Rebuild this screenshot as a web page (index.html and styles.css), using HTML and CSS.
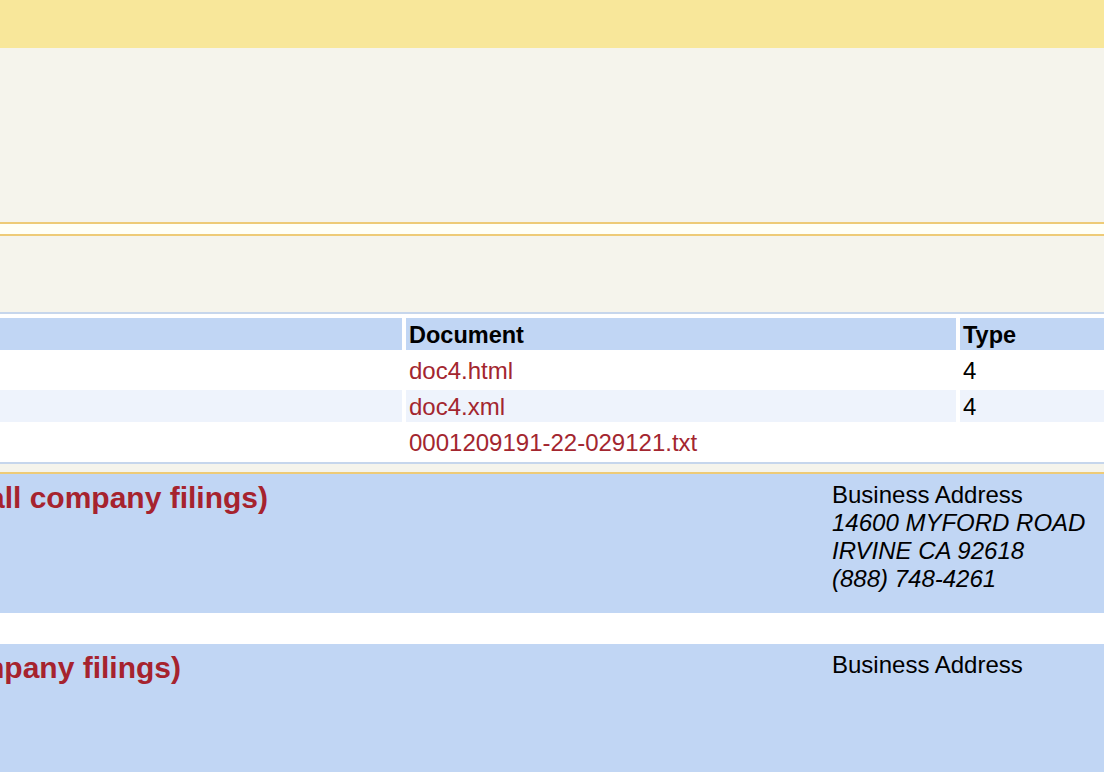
FILE: index.html
```html
<!DOCTYPE html>
<html lang="en">
<head>
<meta charset="utf-8">
<title>Filing Index</title>
<link rel="stylesheet" href="styles.css">
</head>
<body>
<div class="header-top"></div>
<div class="page-title"></div>
<div class="rule-pair"></div>
<div class="form-grouping"></div>

<div class="table-file">
  <div class="cell head"></div>
  <div class="cell head">Document</div>
  <div class="cell head">Type</div>

  <div class="cell"></div>
  <div class="cell"><a href="#">doc4.html</a></div>
  <div class="cell">4</div>

  <div class="cell alt"></div>
  <div class="cell alt"><a href="#">doc4.xml</a></div>
  <div class="cell alt">4</div>

  <div class="cell"></div>
  <div class="cell"><a href="#">0001209191-22-029121.txt</a></div>
  <div class="cell"></div>
</div>

<div class="filer-gap"></div>

<div class="company-info first">
  <div class="name-clip issuer"><span class="company-name">Rivian Automotive, Inc. / DE (Issuer) (see all company filings)</span></div>
  <div class="mailer">
    <div class="mailer-title">Business Address</div>
    <div class="mailer-line">14600 MYFORD ROAD</div>
    <div class="mailer-line">IRVINE CA 92618</div>
    <div class="mailer-line">(888) 748-4261</div>
  </div>
</div>

<div class="company-gap"></div>

<div class="company-info second">
  <div class="name-clip reporting"><span class="company-name">Reporting Owner (Reporting) (see all company filings)</span></div>
  <div class="mailer">
    <div class="mailer-title">Business Address</div>
  </div>
</div>
</body>
</html>
```

FILE: styles.css
```css
html, body {
  margin: 0;
  padding: 0;
  background: #ffffff;
  font-family: "Liberation Sans", Arial, Helvetica, sans-serif;
  color: #000000;
  overflow: hidden;
}

.header-top {
  height: 48px;
  background: #f8e79a;
}

.page-title {
  height: 174px;
  background: #f5f4ec;
}

.rule-pair {
  height: 10px;
  background: #fffff6;
  border-top: 2px solid #eecb77;
  border-bottom: 2px solid #eecb77;
}

.form-grouping {
  height: 76px;
  background: #f5f4ec;
}

.table-file {
  display: grid;
  grid-template-columns: 402px 550px 1fr;
  grid-auto-rows: 32px;
  gap: 4px;
  padding: 4px 0;
  background: #ffffff;
  border-top: 2px solid #c6d6ec;
  border-bottom: 2px solid #c6d6ec;
  font-size: 24px;
  line-height: 28px;
}

.cell {
  padding: 3px 3px 1px 3px;
  white-space: nowrap;
  overflow: hidden;
}

.cell.head {
  background: #c1d6f4;
  font-weight: bold;
  font-size: 23.5px;
}

.cell.alt {
  background: #eef3fc;
}

.cell a {
  color: #a3262f;
  text-decoration: none;
}

.filer-gap {
  height: 8px;
  background: #f5f4ec;
  border-bottom: 2px solid #eecb77;
}

.company-info {
  display: flex;
  align-items: flex-start;
  background: #c1d6f4;
  padding: 7px 0 20px 0;
}

.company-info.second {
  min-height: 150px;
}

.company-gap {
  height: 31px;
  background: #ffffff;
}

.name-clip {
  display: flex;
  justify-content: flex-end;
  white-space: nowrap;
  flex: none;
}

.name-clip.issuer {
  width: 268px;
}

.name-clip.reporting {
  width: 181px;
}

.company-name {
  font-size: 30px;
  line-height: 34px;
  font-weight: bold;
  color: #a6232e;
}

.mailer {
  margin-left: auto;
  width: 272px;
  flex: none;
  line-height: 28px;
  white-space: nowrap;
}

.mailer-title {
  font-size: 24px;
}

.mailer-line {
  font-size: 24px;
  font-style: italic;
}
```
